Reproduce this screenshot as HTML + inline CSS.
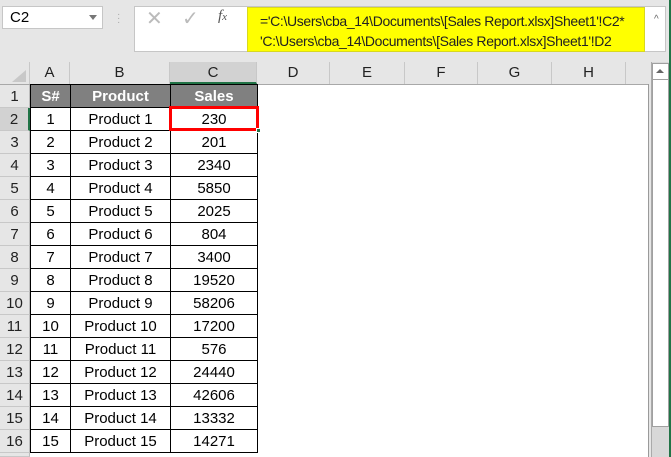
<!DOCTYPE html>
<html style="overflow:hidden;width:671px;height:457px"><head><style>
*{margin:0;padding:0;box-sizing:border-box}
body{width:671px;height:457px;overflow:hidden;background:#e6e6e6;font-family:"Liberation Sans",sans-serif;position:relative}
.a{position:absolute}
.ch{position:absolute;top:62px;height:22px;border-right:1px solid #c8c8c8;text-align:center;font-size:15px;line-height:22px;color:#222}
.rh{position:absolute;left:0;width:30px;height:23px;border-bottom:1px solid #c8c8c8;border-right:1px solid #bcbcbc;text-align:center;font-size:15px;line-height:23px;color:#222;background:#e6e6e6}
table{position:absolute;left:30px;top:84px;border-collapse:collapse;font-size:15px;color:#000}
td{border:1px solid #000;height:23px;text-align:center;padding:0;line-height:21px}
tr.h td{background:#808080;color:#fff;font-weight:bold}
</style></head><body>
<div class="a" style="left:2px;top:6px;width:101px;height:23px;background:#fff;border:1px solid #c6c6c6;font-size:15px;line-height:21px;padding-left:7px">C2</div>
<div class="a" style="left:89px;top:15px;width:0;height:0;border-left:4px solid transparent;border-right:4px solid transparent;border-top:5px solid #777"></div>
<div class="a" style="left:117px;top:13px;color:#aaa;font-size:10px;line-height:4px">·<br>·<br>·</div>
<div class="a" style="left:134px;top:6px;width:532px;height:46px;background:#fff;border:1px solid #c6c6c6"></div>
<div class="a" style="left:146px;top:6px;font-size:20px;color:#bbb">✕</div>
<div class="a" style="left:182px;top:6px;font-size:20px;color:#bbb">✓</div>
<div class="a" style="left:218px;top:8px;font-size:15px;color:#555;font-family:'Liberation Serif',serif;font-style:italic">f<span style="font-size:11px">x</span></div>
<div class="a" style="left:247px;top:7px;width:398px;height:45px;background:#ffff00;border:1px solid #d8d820;font-size:14px;letter-spacing:-0.35px;line-height:20px;padding:3px 0 0 12px;color:#222;white-space:nowrap;overflow:hidden">='C:\Users\cba_14\Documents\[Sales Report.xlsx]Sheet1'!C2*<br>'C:\Users\cba_14\Documents\[Sales Report.xlsx]Sheet1'!D2</div>
<div class="a" style="left:654px;top:14px;font-size:10px;color:#666">^</div>
<div class="a" style="left:30px;top:84px;width:619px;height:373px;background:#fff;border-right:1px solid #9a9a9a"></div>
<div class="a" style="left:0;top:62px;width:648px;height:23px;border-bottom:1px solid #a8a8a8"></div>
<div class="a" style="left:12px;top:70px;width:0;height:0;border-left:14px solid transparent;border-bottom:12px solid #c8c8c8"></div>
<div class="a" style="left:29px;top:62px;width:1px;height:22px;background:#c8c8c8"></div>
<div class="ch" style="left:30px;width:40px">A</div>
<div class="ch" style="left:70px;width:100px">B</div>
<div class="ch" style="left:170px;width:87px;background:#d2d2d2;border-bottom:2px solid #217346">C</div>
<div class="ch" style="left:257px;width:73px">D</div>
<div class="ch" style="left:330px;width:75px">E</div>
<div class="ch" style="left:405px;width:73px">F</div>
<div class="ch" style="left:478px;width:74px">G</div>
<div class="ch" style="left:552px;width:74px">H</div>
<div class="rh" style="top:85px">1</div>
<div class="rh" style="top:108px;background:#d2d2d2;border-right:2px solid #217346">2</div>
<div class="rh" style="top:131px">3</div>
<div class="rh" style="top:154px">4</div>
<div class="rh" style="top:177px">5</div>
<div class="rh" style="top:200px">6</div>
<div class="rh" style="top:223px">7</div>
<div class="rh" style="top:246px">8</div>
<div class="rh" style="top:269px">9</div>
<div class="rh" style="top:292px">10</div>
<div class="rh" style="top:315px">11</div>
<div class="rh" style="top:338px">12</div>
<div class="rh" style="top:361px">13</div>
<div class="rh" style="top:384px">14</div>
<div class="rh" style="top:407px">15</div>
<div class="rh" style="top:430px">16</div>
<div class="rh" style="top:453px;height:4px"></div>
<table>
<colgroup><col style="width:40px"><col style="width:100px"><col style="width:87px"></colgroup>
<tr class="h"><td>S#</td><td>Product</td><td>Sales</td></tr>
<tr><td>1</td><td>Product 1</td><td>230</td></tr>
<tr><td>2</td><td>Product 2</td><td>201</td></tr>
<tr><td>3</td><td>Product 3</td><td>2340</td></tr>
<tr><td>4</td><td>Product 4</td><td>5850</td></tr>
<tr><td>5</td><td>Product 5</td><td>2025</td></tr>
<tr><td>6</td><td>Product 6</td><td>804</td></tr>
<tr><td>7</td><td>Product 7</td><td>3400</td></tr>
<tr><td>8</td><td>Product 8</td><td>19520</td></tr>
<tr><td>9</td><td>Product 9</td><td>58206</td></tr>
<tr><td>10</td><td>Product 10</td><td>17200</td></tr>
<tr><td>11</td><td>Product 11</td><td>576</td></tr>
<tr><td>12</td><td>Product 12</td><td>24440</td></tr>
<tr><td>13</td><td>Product 13</td><td>42606</td></tr>
<tr><td>14</td><td>Product 14</td><td>13332</td></tr>
<tr><td>15</td><td>Product 15</td><td>14271</td></tr>
</table>
<div class="a" style="left:169px;top:106px;width:90px;height:25px;border:3px solid #ff0000"></div>
<div class="a" style="left:256px;top:128px;width:5px;height:5px;background:#217346;border:1px solid #fff"></div>
<div class="a" style="left:651px;top:62px;width:18px;height:395px;background:#d8d8d8;border-left:1px solid #aaa"></div>
<div class="a" style="left:652px;top:63px;width:17px;height:364px;background:#fff;border:1px solid #a0a0a0"></div>
<div class="a" style="left:652px;top:63px;width:17px;height:17px;border-bottom:1px solid #a0a0a0"></div>
<div class="a" style="left:656px;top:69px;width:0;height:0;border-left:4px solid transparent;border-right:4px solid transparent;border-bottom:4px solid #666"></div>
<div class="a" style="left:669px;top:0;width:2px;height:457px;background:#217346"></div>
</body></html>
